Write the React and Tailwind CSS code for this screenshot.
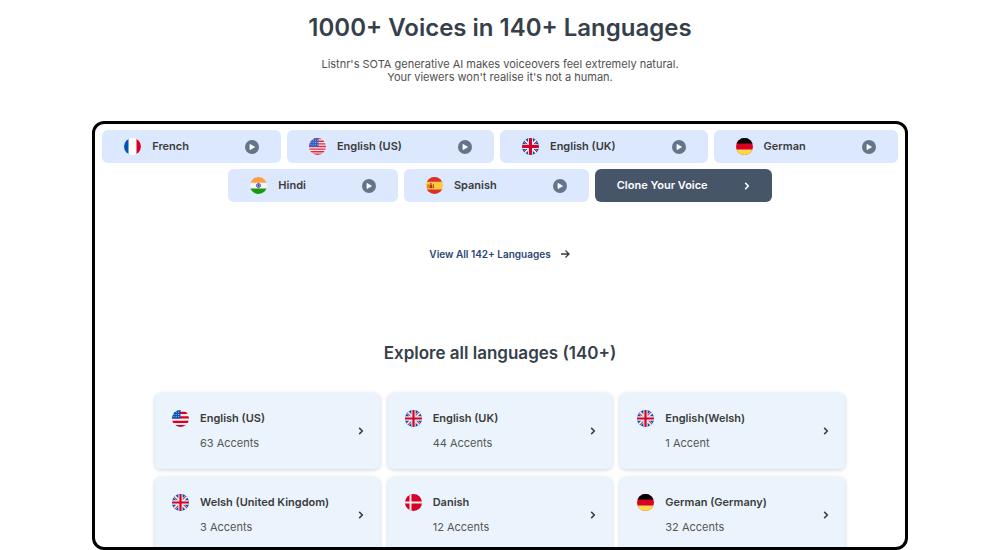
import React from "react";

function FrenchFlag() {
  return (
    <>
      <rect width="34" height="34" fill="#fff" />
      <rect width="9" height="34" fill="#0052b4" />
      <rect x="25" width="9" height="34" fill="#d80027" />
    </>
  );
}

function UsFlagFine() {
  return (
    <>
      <rect width="34" height="34" fill="#f7eef1" />
      <path
        d="M0 1.300h34M0 6.500h34M0 11.700h34M0 17h34M0 22.200h34M0 27.400h34M0 32.600h34"
        stroke="#e0283f"
        strokeWidth="2.800"
      />
      <rect width="19" height="18" fill="#3a5cbc" />
      <path
        d="M3 4.500h15M3 9h15M3 13.500h15"
        stroke="#b9c7ec"
        strokeWidth="1.500"
        strokeDasharray="2 2.500"
      />
    </>
  );
}

function UsFlag() {
  return (
    <>
      <rect width="34" height="34" fill="#f0f0f0" />
      <path
        d="M0 5.900h34M0 14.750h34M0 23.600h34M0 32.150h34"
        stroke="#d80027"
        strokeWidth="4.400"
      />
      <rect width="17" height="17" fill="#0052b4" />
      <g fill="#e6eefa">
        <rect x="7.500" y="3.500" width="1.800" height="1.800" />
        <rect x="12.500" y="3.500" width="1.800" height="1.800" />
        <rect x="3" y="8" width="1.800" height="1.800" />
        <rect x="7.500" y="8" width="1.800" height="1.800" />
        <rect x="12.500" y="8" width="1.800" height="1.800" />
        <rect x="3" y="12.500" width="1.800" height="1.800" />
        <rect x="7.500" y="12.500" width="1.800" height="1.800" />
        <rect x="12.500" y="12.500" width="1.800" height="1.800" />
      </g>
    </>
  );
}

function UkFlagBold() {
  return (
    <>
      <rect width="34" height="34" fill="#0052b4" />
      <path d="M0 0l34 34M34 0L0 34" stroke="#f0f0f0" strokeWidth="5.500" />
      <path d="M3 5l10 10M31 5L21 15M3 29l10-10M31 29L21 19" stroke="#d80027" strokeWidth="2" />
      <path d="M17 0v34M0 17h34" stroke="#f0f0f0" strokeWidth="9.500" />
      <path d="M17 0v34M0 17h34" stroke="#d80027" strokeWidth="6" />
    </>
  );
}

function UkFlag() {
  return (
    <>
      <rect width="34" height="34" fill="#0052b4" />
      <path d="M0 0l34 34M34 0L0 34" stroke="#f0f0f0" strokeWidth="6" />
      <path
        d="M3 4.500L14 15.500M29.500 3L19 13.500M4.500 31L15 20.500M31 29.500L20 18.500"
        stroke="#d80027"
        strokeWidth="2"
      />
      <path d="M17 0v34M0 17h34" stroke="#f0f0f0" strokeWidth="8.600" />
      <path d="M17 0v34M0 17h34" stroke="#d80027" strokeWidth="4.400" />
    </>
  );
}

function GermanFlag() {
  return (
    <>
      <rect width="34" height="34" fill="#d80027" />
      <rect width="34" height="11" fill="#000" />
      <rect y="23" width="34" height="11" fill="#ffda44" />
    </>
  );
}

function IndianFlag() {
  return (
    <>
      <rect width="34" height="34" fill="#f5f5f5" />
      <rect width="34" height="11.5" fill="#ff9f45" />
      <rect y="23" width="34" height="11" fill="#189a0c" />
      <circle cx="17" cy="17" r="4" fill="#c9ccec" stroke="#2a2f9c" strokeWidth="1.6" />
      <circle cx="17" cy="17" r="1.8" fill="#1e2491" />
    </>
  );
}

function SpanishFlag() {
  return (
    <>
      <rect width="34" height="34" fill="#ffc93c" />
      <rect width="34" height="9.5" fill="#d9302f" />
      <rect y="25" width="34" height="9" fill="#d9302f" />
      <path
        d="M4 14.500v8M15 14.500v8M7 21.500h6M8 13.500h3.500"
        stroke="#b5331f"
        strokeWidth="1.800"
        fill="none"
      />
      <rect x="7" y="15" width="5.500" height="7" fill="#b5331f" />
    </>
  );
}

function DanishFlag() {
  return (
    <>
      <rect width="34" height="34" fill="#d80027" />
      <path d="M11 0v34M0 17h34" stroke="#f0f0f0" strokeWidth="4" />
    </>
  );
}

function Flag({ design: Design }) {
  return (
    <svg
      viewBox="0 0 34 34"
      className="size-[17px] shrink-0 overflow-hidden rounded-full"
      aria-hidden="true"
    >
      <Design />
    </svg>
  );
}

function PlayIcon() {
  return (
    <svg viewBox="0 0 14 14" className="size-3.5 shrink-0" aria-hidden="true">
      <circle cx="7" cy="7" r="7" fill="#64748b" />
      <path
        d="M5 4.400v5.200l4.500-2.600z"
        fill="#fff"
        stroke="#fff"
        strokeWidth="0.8"
        strokeLinejoin="round"
      />
    </svg>
  );
}

function Chevron() {
  return (
    <svg
      viewBox="0 0 14 14"
      className="size-3.5 shrink-0"
      fill="none"
      stroke="currentColor"
      strokeWidth="1.5"
      aria-hidden="true"
    >
      <path d="M5.200 3.900L8.300 7l-3.100 3.100" />
    </svg>
  );
}

const voices = [
  { name: "French", flag: FrenchFlag },
  { name: "English (US)", flag: UsFlagFine },
  { name: "English (UK)", flag: UkFlagBold },
  { name: "German", flag: GermanFlag },
  { name: "Hindi", flag: IndianFlag },
  { name: "Spanish", flag: SpanishFlag },
];

const languages = [
  { name: "English (US)", accents: "63 Accents", flag: UsFlag },
  { name: "English (UK)", accents: "44 Accents", flag: UkFlag },
  { name: "English(Welsh)", accents: "1 Accent", flag: UkFlag },
  { name: "Welsh (United Kingdom)", accents: "3 Accents", flag: UkFlag },
  { name: "Danish", accents: "12 Accents", flag: DanishFlag },
  { name: "German (Germany)", accents: "32 Accents", flag: GermanFlag },
];

export default function App() {
  return (
    <main className="flex h-screen flex-col bg-white font-['Inter',sans-serif] text-[#3b3b3b]">
      <header className="px-4 pt-3 text-center">
        <h1 className="text-[24px] leading-8 font-semibold text-[#36404a]">
          1000+ Voices in 140+ Languages
        </h1>
        <p className="mt-3.5 text-[11px] leading-[13px] text-[#505050]">
          Listnr's SOTA generative AI makes voiceovers feel extremely natural.
          <br />
          Your viewers won't realise it's not a human.
        </p>
      </header>

      <section className="mx-auto mt-[37px] flex min-h-0 w-full max-w-[816px] flex-1 flex-col items-center overflow-hidden rounded-xl border-3 border-black px-1 pt-1.5">
        <div className="flex flex-wrap justify-center gap-1.5">
          {voices.map(({ name, flag }) => (
            <button
              key={name}
              type="button"
              className="flex h-[33px] items-center rounded-md bg-[#dbe8fe] px-[22px] text-[11px] font-semibold"
            >
              <Flag design={flag} />
              <span className="mr-14 ml-[11px]">{name}</span>
              <PlayIcon />
            </button>
          ))}
          <a
            href="#clone"
            className="flex h-[33px] items-center gap-8 rounded-md bg-[#475569] pr-[18px] pl-[22px] text-[11px] font-semibold text-white"
          >
            Clone Your Voice
            <Chevron />
          </a>
        </div>

        <a
          href="#languages"
          className="mt-11 flex items-center gap-2 text-[10px] leading-4 font-semibold text-[#2a4674]"
        >
          View All 142+ Languages
          <svg
            viewBox="0 0 12 12"
            className="size-3"
            fill="none"
            stroke="#353b42"
            strokeWidth="1.3"
            aria-hidden="true"
          >
            <path d="M2 6h8M6.500 2.500L10 6 6.500 9.500" />
          </svg>
        </a>

        <h2
          id="languages"
          className="mt-[79px] text-[17px] leading-6 font-semibold text-[#36404a]"
        >
          Explore all languages (140+)
        </h2>

        <div className="mt-7 grid w-full max-w-[690px] grid-cols-3 gap-2">
          {languages.map(({ name, accents, flag }) => (
            <a
              key={name}
              href="#accents"
              className="flex h-[76px] items-center rounded-md bg-[#ebf4fc] pr-3 pl-[17px] shadow-[0_1px_4px_rgba(30,50,110,0.22)]"
            >
              <div className="flex flex-1 items-start gap-[11px]">
                <Flag design={flag} />
                <div>
                  <h3 className="text-[11px] leading-4 font-semibold">{name}</h3>
                  <p className="mt-2 text-[11px] leading-[18px] text-[#555]">{accents}</p>
                </div>
              </div>
              <Chevron />
            </a>
          ))}
        </div>
      </section>
    </main>
  );
}
